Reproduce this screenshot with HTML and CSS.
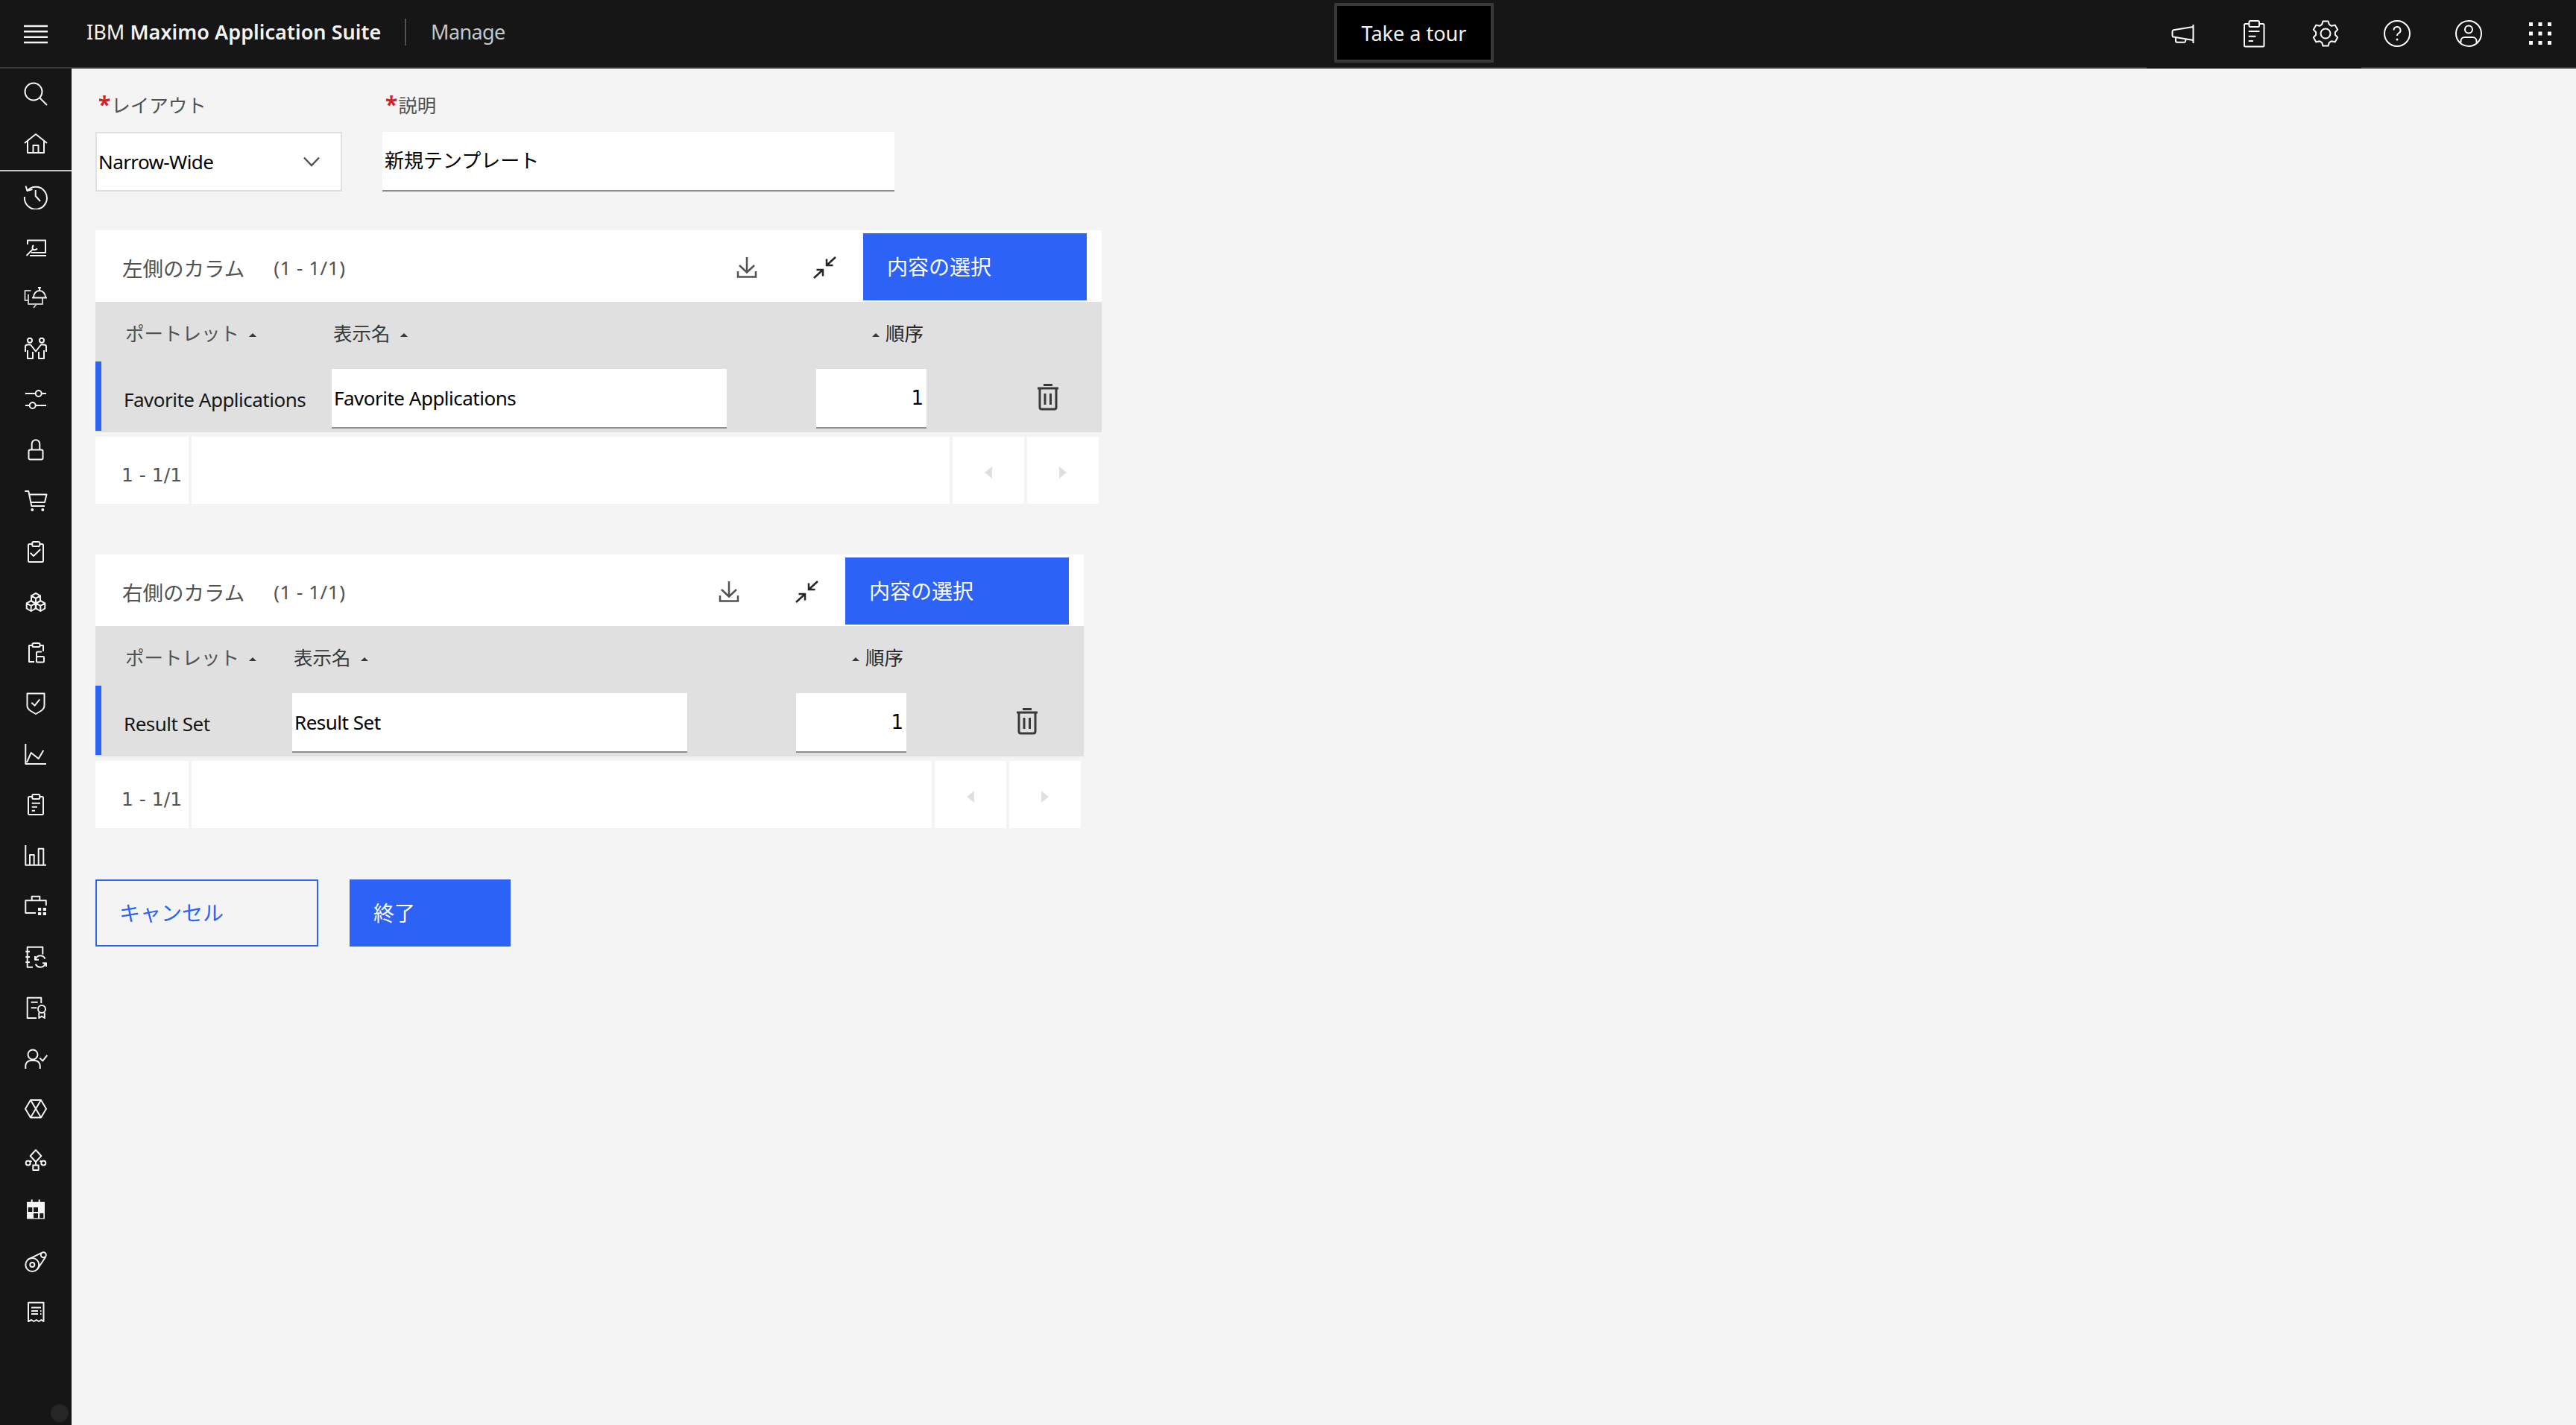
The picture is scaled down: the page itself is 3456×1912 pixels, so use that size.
FILE: index.html
```html
<!DOCTYPE html>
<html lang="ja">
<head>
  <meta charset="UTF-8">
  <title>IBM Maximo Application Suite - Manage</title>
  <link rel="stylesheet" href="styles.css">
</head>
<body>
  <header class="topbar">
    <button class="menu-btn" aria-label="Menu">
      <svg width="32" height="26" viewBox="0 0 32 26"><path d="M0 2h32M0 9.300h32M0 16.700h32M0 24h32"/></svg>
    </button>
    <div class="brand">IBM <b>Maximo Application Suite</b></div>
    <div class="product">Manage</div>
    <button class="tour-btn">Take a tour</button>
    <div class="top-actions">
      <button class="top-btn flush">
        <svg viewBox="0 0 40 40"><path d="M34.500 8v25M34.500 11 8 15.200q-1.500.3-1.500 2v5.300q0 1.700 1.500 2L34.500 29M11 25.500v4.500q0 1.700 1.700 1.700h9.600q1.400 0 1.700-1.400l.6-2.800"/></svg>
      </button>
      <button class="top-btn flush">
        <svg viewBox="0 0 40 40"><rect x="7" y="7" width="26.500" height="30.500" rx="1.500"/><rect class="fill-bg" x="13.500" y="3" width="13.500" height="8" rx="1.500"/><path d="M12.700 17h14.700M12.700 23.700h9.700M12.700 30H19"/></svg>
      </button>
      <button class="top-btn flush">
        <svg viewBox="0 0 40 40"><path d="M15.100 7.900 16.500 3.400h7l1.400 4.500 3.100 1.900 4.600-1.200 3.600 6.100-3.300 3.500v3.600l3.300 3.500-3.600 6.100-4.600-1.200-3.100 1.900-1.400 4.500h-7l-1.400-4.500-3.100-1.900-4.600 1.200-3.600-6.100 3.300-3.500v-3.600L3.800 14.700l3.600-6.100 4.600 1.200z"/><circle cx="20" cy="20" r="6.500"/></svg>
      </button>
      <button class="top-btn">
        <svg viewBox="0 0 40 40"><circle cx="20" cy="20" r="17"/><path d="M15.500 15.500a4.500 4.500 0 1 1 6.700 3.900c-1.600.9-2.200 1.700-2.200 3.600"/><circle class="dot" cx="20" cy="28" r="1.500"/></svg>
      </button>
      <button class="top-btn">
        <svg viewBox="0 0 40 40"><circle cx="20" cy="20" r="17"/><circle cx="20" cy="14.500" r="5"/><path d="M9.500 32v-2a5 5 0 0 1 5-5h11a5 5 0 0 1 5 5v2"/></svg>
      </button>
      <button class="top-btn">
        <svg viewBox="0 0 40 40"><path class="dot" d="M5 5h5v5H5zM17.500 5h5v5h-5zM30 5h5v5h-5zM5 17.500h5v5H5zM17.500 17.500h5v5h-5zM30 17.500h5v5h-5zM5 30h5v5H5zM17.500 30h5v5h-5zM30 30h5v5h-5z"/></svg>
      </button>
    </div>
  </header>

  <div class="shell">
    <nav class="sidenav">
      <div class="nav-group">
        <svg viewBox="0 0 36 36"><circle cx="15" cy="16" r="11.500"/><path d="M23.500 24.500 33 34"/></svg>
        <svg viewBox="0 0 36 36"><path d="M3 17 18 5l15 12M7 14v16h22V14M14.500 30V20h7v10"/></svg>
      </div>
      <hr class="nav-rule">
      <div class="nav-group">
        <svg viewBox="0 0 36 36"><path d="M6.500 11A15 15 0 1 1 3 19M4.500 4.500 6.500 11l7-2M17.700 10v8l6.300 7"/></svg>
        <svg viewBox="0 0 36 36"><path d="M7 15V9.500h24V26H12M10 30h22M5.500 30l8.500-8.500a5 5 0 0 1 1-5.500M14 21.500a5 5 0 0 0 6-1"/></svg>
        <svg viewBox="0 0 36 36"><path class="dim" d="M11.500 9H3.500v13h4M8 14v13h11l-4 5M19 27h8v-8"/><path d="M15 18a8 9 0 0 1 16 0M13 18.500h20M21 5h4M23 5v4"/></svg>
        <svg viewBox="0 0 36 36"><circle cx="10" cy="7.700" r="3"/><circle cx="26" cy="7.700" r="3"/><path d="M4 23v-7q0-2.500 3-2.500h4l7 9 7-9h4q3 0 3 2.500v7M7 21v11h7v-9M22 23v9h7V21"/></svg>
        <svg viewBox="0 0 36 36"><circle cx="21.700" cy="11" r="4"/><circle cx="13.700" cy="27" r="4"/><path d="M4 11h13.700M25.700 11H32M4 27h5.700M17.700 27H32"/></svg>
        <svg viewBox="0 0 36 36"><rect x="8.500" y="18.500" width="19" height="13" rx="2"/><path d="M12.700 18v-7.500a5.300 5.300 0 0 1 10.600 0V18"/></svg>
        <svg viewBox="0 0 36 36"><path d="M3.300 6h5l4 20H30M8.800 10.500h23.700L30 21H11"/><circle class="dot" cx="13.300" cy="31" r="2"/><circle class="dot" cx="27.300" cy="31" r="2"/></svg>
        <svg viewBox="0 0 36 36"><rect x="8" y="9" width="20" height="24" rx="1.500"/><rect class="fill-bg" x="13.300" y="6" width="10" height="6" rx="1.500"/><path d="M10.700 20.700 15 25l9.300-9"/></svg>
        <svg viewBox="0 0 36 36"><path d="m18 7 6 3.300v7L18 21l-6-3.700v-7zM12 10.300l6 3.500 6-3.500M18 13.800V21"/><path d="m11.700 17 6 3.300v7l-6 3.700-6-3.700v-7zM5.700 20.300l6 3.500 6-3.500M11.700 23.800V31"/><path d="m24.300 17 6 3.300v7l-6 3.700-6-3.700v-7zM18.300 20.300l6 3.500 6-3.500M24.300 23.800V31"/></svg>
        <svg viewBox="0 0 36 36"><path d="M13 9H9v22h7M24 9h4v8M19 24v-5q0-1.500 1.500-1.500H26"/><rect class="fill-bg" x="13.500" y="6" width="10" height="5" rx="1.500"/><rect x="19" y="24" width="10" height="7.500" rx="1"/></svg>
        <svg viewBox="0 0 36 36"><path d="M6.500 5.500h23v16q0 4-4 7L18 33l-7.500-4.500q-4-3-4-7zM12.300 17.700l4.400 4 6.600-8.400"/></svg>
        <svg viewBox="0 0 36 36"><path d="M4.300 5v27H32M6 30l5.700-13 10 8 6.600-11.300"/></svg>
        <svg viewBox="0 0 36 36"><rect x="8" y="8" width="20" height="24" rx="1.500"/><rect class="fill-bg" x="13.300" y="5" width="10" height="6" rx="1.500"/><path d="M12.700 16.700H24M12.700 21.700H20M12.700 26.700H17"/></svg>
        <svg viewBox="0 0 36 36"><path d="M4.300 5v26.700H32M10 31.700V18h5.700v13.700M21.700 31.700V9.700h6.600v22"/></svg>
        <svg viewBox="0 0 36 36"><path d="M18 28H4.300V11.300h27.500V18M12.700 11.300V5.700h10.600v5.600"/><path class="dot" d="M21 21h4.200v4H21zM27.700 21H32v4h-4.300zM21 27h4.200v4H21zM27.700 27H32v4h-4.300z"/></svg>
        <svg viewBox="0 0 36 36"><path d="M27.300 15.500V5.700H6.700v27h7.300M4.300 11.700H10M4.300 19H10M4.300 26H10M17.700 21.500a7 7 0 0 1 12.800 0M30.700 28a7 7 0 0 1-13 .5M17 18v4.700h5M32 32v-4.700h-5"/></svg>
        <svg viewBox="0 0 36 36"><path d="M19 33H6.700V5.700h18.600V13M11.700 11.700h9M11.700 19.300h7.600M22.300 25.500V33l3.700-2.500 3.800 2.500v-7.500"/><circle cx="26" cy="21" r="5"/></svg>
        <svg viewBox="0 0 36 36"><circle cx="14" cy="14" r="6.500"/><path d="M4.300 33v-4a7 7 0 0 1 7-7h5.400a7 7 0 0 1 7 7v4M23.300 18.600l4 3.800 6-7.600"/></svg>
        <svg viewBox="0 0 36 36"><path d="M11 7h14l7 11.800-7 11.700H11L4 18.800zM11 7l14 23.500M25 7 11 30.500"/></svg>
        <svg viewBox="0 0 36 36"><path d="m18 6 7.300 8L18 22l-7.300-8zM18 22v4.500M10.700 20l1.500 2M25.300 20l-1.500 2"/><circle cx="7.700" cy="23.400" r="3"/><circle cx="28.300" cy="23.400" r="3"/><rect x="14.300" y="26.500" width="7.400" height="6.500"/></svg>
        <svg viewBox="0 0 36 36"><path class="dot" fill-rule="evenodd" d="M6 7.700h24v22.800H6zM7.700 15v6h5.600v-6zM15 15v6h6v-6zM15 23v6.300h6V23zM23.300 23v6.300h5V23z"/><path d="M12.700 4.500v6M22.700 4.500v6"/></svg>
        <svg viewBox="0 0 36 36"><circle cx="13.300" cy="24" r="9"/><circle cx="13.300" cy="24" r="3"/><circle cx="28.300" cy="10.700" r="3.500"/><path d="M7 17.200 25.500 8.200M20 30.200 31 13.700"/></svg>
        <svg viewBox="0 0 36 36"><path d="M8 6.700h20.500V32l-3-2-3.400 2-3.300-2-3.300 2-3.400-2L8 32zM12 13.500h13M12 18h9M24 18h1.500M12 22h9M24 22h1.500"/></svg>
      </div>
      <span class="nav-dot"></span>
    </nav>

    <main class="content">
      <div class="form-row">
        <div class="field field-layout">
          <label class="field-label"><span class="req">*</span>レイアウト</label>
          <div class="select">
            <span>Narrow-Wide</span>
            <svg width="22" height="14" viewBox="0 0 22 14"><path d="M1 1.500 11 12 21 1.500"/></svg>
          </div>
        </div>
        <div class="field field-desc">
          <label class="field-label"><span class="req">*</span>説明</label>
          <input class="text-input" type="text" value="新規テンプレート">
        </div>
      </div>

      <section class="panel panel-left">
        <div class="panel-head">
          <h2 class="panel-title">左側のカラム</h2>
          <span class="panel-count">(1 - 1/1)</span>
          <button class="icon-btn">
            <svg width="32" height="32" viewBox="0 0 32 32"><path d="M16 3v20M6 14l10 9.500L26 14M4 22v7.500h24V22"/></svg>
          </button>
          <button class="icon-btn dark">
            <svg width="32" height="32" viewBox="0 0 32 32"><path d="M31 3 19 14M19 5.500V14h8.500M2 31l12-11M5.500 20H14v8.500"/></svg>
          </button>
          <button class="primary-btn">内容の選択</button>
        </div>
        <div class="grid-wrap">
          <div class="grid-row grid-header">
            <div class="col-name">ポートレット<i class="sort"></i></div>
            <div class="col-label">表示名<i class="sort"></i></div>
            <div></div>
            <div class="col-order"><i class="sort"></i>順序</div>
          </div>
          <div class="grid-row grid-body">
            <div class="cell-name">Favorite Applications</div>
            <input class="text-input cell-input" type="text" value="Favorite Applications">
            <div></div>
            <input class="text-input cell-input num" type="text" value="1">
            <button class="trash">
              <svg width="30" height="36" viewBox="0 0 30 36"><path d="M9 1.500h12M1 6h28M4 6v25.500q0 2.500 2.500 2.500h17q2.500 0 2.500-2.500V6M11 13v15M18.500 13v15"/></svg>
            </button>
          </div>
        </div>
        <div class="pager">
          <div class="pager-info">1 - 1/1</div>
          <div class="pager-fill"></div>
          <div class="pager-btn"><i class="arrow prev"></i></div>
          <div class="pager-btn"><i class="arrow next"></i></div>
        </div>
      </section>

      <section class="panel panel-right">
        <div class="panel-head">
          <h2 class="panel-title">右側のカラム</h2>
          <span class="panel-count">(1 - 1/1)</span>
          <button class="icon-btn">
            <svg width="32" height="32" viewBox="0 0 32 32"><path d="M16 3v20M6 14l10 9.500L26 14M4 22v7.500h24V22"/></svg>
          </button>
          <button class="icon-btn dark">
            <svg width="32" height="32" viewBox="0 0 32 32"><path d="M31 3 19 14M19 5.500V14h8.500M2 31l12-11M5.500 20H14v8.500"/></svg>
          </button>
          <button class="primary-btn">内容の選択</button>
        </div>
        <div class="grid-wrap">
          <div class="grid-row grid-header">
            <div class="col-name">ポートレット<i class="sort"></i></div>
            <div class="col-label">表示名<i class="sort"></i></div>
            <div></div>
            <div class="col-order"><i class="sort"></i>順序</div>
          </div>
          <div class="grid-row grid-body">
            <div class="cell-name">Result Set</div>
            <input class="text-input cell-input" type="text" value="Result Set">
            <div></div>
            <input class="text-input cell-input num" type="text" value="1">
            <button class="trash">
              <svg width="30" height="36" viewBox="0 0 30 36"><path d="M9 1.500h12M1 6h28M4 6v25.500q0 2.500 2.500 2.500h17q2.500 0 2.500-2.500V6M11 13v15M18.500 13v15"/></svg>
            </button>
          </div>
        </div>
        <div class="pager">
          <div class="pager-info">1 - 1/1</div>
          <div class="pager-fill"></div>
          <div class="pager-btn"><i class="arrow prev"></i></div>
          <div class="pager-btn"><i class="arrow next"></i></div>
        </div>
      </section>

      <div class="form-actions">
        <button class="outline-btn">キャンセル</button>
        <button class="primary-btn finish">終了</button>
      </div>
    </main>
  </div>
</body>
</html>
```

FILE: styles.css
```css
* { box-sizing: border-box; }
html, body { height: 100%; }
body { margin: 0; background: #f4f4f4; font-family: "Noto Sans", "Noto Sans CJK JP", sans-serif; font-size: 28px; color: #161616; overflow: hidden; }
button { font: inherit; border: 0; background: none; padding: 0; color: inherit; }
input { font: inherit; }
h2 { margin: 0; font: inherit; }

/* top bar */
.topbar { display: flex; align-items: stretch; height: 92px; background: #161616; border-bottom: 2px solid #393939; color: #f4f4f4; }
.menu-btn { width: 96px; display: flex; align-items: center; justify-content: center; margin-bottom: -2px; }
.menu-btn svg { fill: none; stroke: #f4f4f4; stroke-width: 2.500; }
.brand { margin-left: 20px; width: 429px; border-right: 2px solid #525252; margin-top: 25px; height: 36px; line-height: 36px; white-space: nowrap; font-size: 27px; letter-spacing: .05px; }
.brand b { font-weight: 600; }
.product { margin-left: 33px; margin-top: 25px; height: 36px; line-height: 36px; font-size: 27px; letter-spacing: -.6px; color: #c6c6c6; }
.tour-btn { position: absolute; left: 1790px; top: 4px; width: 214px; height: 80px; background: #000; border: 4px solid #393939; color: #f4f4f4; font-size: 27px; }
.top-actions { margin-left: auto; display: flex; }
.top-btn { width: 96px; display: flex; align-items: center; justify-content: center; }
.top-btn.flush { height: 92px; background: #161616; z-index: 1; padding-bottom: 2px; }
.top-btn svg { width: 40px; height: 40px; fill: none; stroke: #fff; stroke-width: 2; stroke-linejoin: round; }
.top-btn svg .dot { fill: #fff; stroke: none; }
.fill-bg { fill: #161616; }

/* left rail */
.shell { display: flex; height: calc(100% - 92px); }
.sidenav { position: relative; width: 96px; flex: none; background: #161616; padding-top: 15px; }
.nav-group { display: flex; flex-direction: column; align-items: center; gap: 32px; }
.nav-group svg { width: 36px; height: 36px; fill: none; stroke: #f4f4f4; stroke-width: 2; stroke-linejoin: round; }
.nav-group svg .dot { fill: #f4f4f4; stroke: none; }
.nav-group svg .dim { stroke: #c6c6c6; }
.nav-rule { height: 2px; margin: 17px 0 15px; border: 0; background: #c6c6c6; }
.nav-dot { position: absolute; left: 68px; bottom: 4px; width: 24px; height: 24px; border-radius: 50%; background: #262626; }

/* content */
.content { flex: 1; padding: 29px 0 0 32px; }
.form-row { display: flex; gap: 54px; }
.field { display: flex; flex-direction: column; }
.field-layout { width: 331px; }
.field-desc { width: 687px; }
.field-label { height: 56px; padding: 0 0 0 4px; font-size: 25.500px; color: #525252; white-space: nowrap; }
.req { color: #da1e28; font-weight: 700; font-size: 30px; line-height: 30px; margin-right: 1px; vertical-align: 0; }
.select { height: 80px; display: flex; align-items: center; justify-content: space-between; padding: 0 28px 0 2px; background: #fff; border: 2px solid #e0e0e0; font-size: 26px; letter-spacing: -.6px; color: #000; }
.select svg { fill: none; stroke: #525252; stroke-width: 2.500; }
.text-input { display: block; width: 100%; height: 80px; padding: 0 3px 4px; border: 0; border-bottom: 2px solid #8d8d8d; border-radius: 0; background: #fff; font-size: 26px; color: #000; outline: none; }

.panel { position: relative; margin-top: 52px; }
.panel + .panel { margin-top: 68px; }
.panel-left { width: 1350px; --cols: 317px 530px 120px 148px 1fr; --trash-left: 148px; }
.panel-right { width: 1326px; --cols: 264px 530px 146px 148px 1fr; --trash-left: 147px; }
.panel-head { display: flex; align-items: center; height: 96px; padding: 2px 20px 0 36px; background: #fff; }
.panel-title { color: #525252; font-size: 27.500px; margin: 1px 39px 0 0; }
.panel-count { color: #525252; font-size: 26px; letter-spacing: .5px; margin: 1px auto 0 0; }
.icon-btn { width: 104px; height: 90px; display: flex; align-items: center; justify-content: center; }
.icon-btn svg { fill: none; stroke: #525252; stroke-width: 2.500; }
.icon-btn.dark svg { stroke: #262626; }
.primary-btn { width: 300px; height: 90px; padding: 0 0 2px 32px; text-align: left; background: #2d62f6; color: #fff; }

.grid-wrap { background: #e0e0e0; }
.grid-row { display: grid; grid-template-columns: var(--cols); }
.grid-header { height: 80px; align-items: center; font-size: 25.500px; }
.grid-header > div { white-space: nowrap; }
.col-name { padding-left: 40px; color: #525252; }
.col-label { padding-left: 2px; color: #393939; }
.col-order { text-align: right; padding-right: 4px; color: #262626; }
.sort { display: inline-block; width: 0; height: 0; margin: 0 10px 5px 13px; border-left: 5px solid transparent; border-right: 5px solid transparent; border-bottom: 5px solid #393939; }
.col-order .sort { margin: 0 8px 5px 0; }
.grid-body { height: 95px; padding-top: 10px; align-items: start; }
.grid-body::before { content: ""; position: absolute; width: 8px; height: 93px; margin-top: -10px; background: #2d62f6; }
.cell-name { padding: 23px 0 0 38px; font-size: 26px; letter-spacing: -.5px; color: #161616; white-space: nowrap; }
.cell-input { height: 80px; padding-bottom: 0; letter-spacing: -.5px; }
.cell-input.num { text-align: right; padding-right: 4px; letter-spacing: 0; font-family: "DejaVu Sans", sans-serif; }
.trash { margin-left: var(--trash-left); margin-top: 20px; width: 30px; height: 36px; }
.trash svg { display: block; fill: none; stroke: #393939; stroke-width: 3; }

.pager { display: flex; gap: 4px; height: 90px; margin-top: 6px; padding-right: 4px; }
.pager > div { background: #fff; }
.pager-info { width: 125px; padding: 37px 0 0 35px; font-family: "DejaVu Sans", sans-serif; font-size: 25px; letter-spacing: 0; color: #525252; white-space: nowrap; }
.pager-fill { flex: 1; }
.pager-btn { width: 96px; display: flex; align-items: center; justify-content: center; }
.arrow { width: 0; height: 0; margin-top: 6px; border-top: 8px solid transparent; border-bottom: 8px solid transparent; }
.arrow.prev { border-right: 10px solid #e0e0e0; }
.arrow.next { border-left: 10px solid #e0e0e0; }

.form-actions { display: flex; gap: 42px; margin-top: 69px; }
.outline-btn { width: 299px; height: 90px; padding: 0 0 2px 30px; text-align: left; background: none; border: 2px solid #2d62f6; color: #2d62f6; }
.primary-btn.finish { width: 216px; }
```
